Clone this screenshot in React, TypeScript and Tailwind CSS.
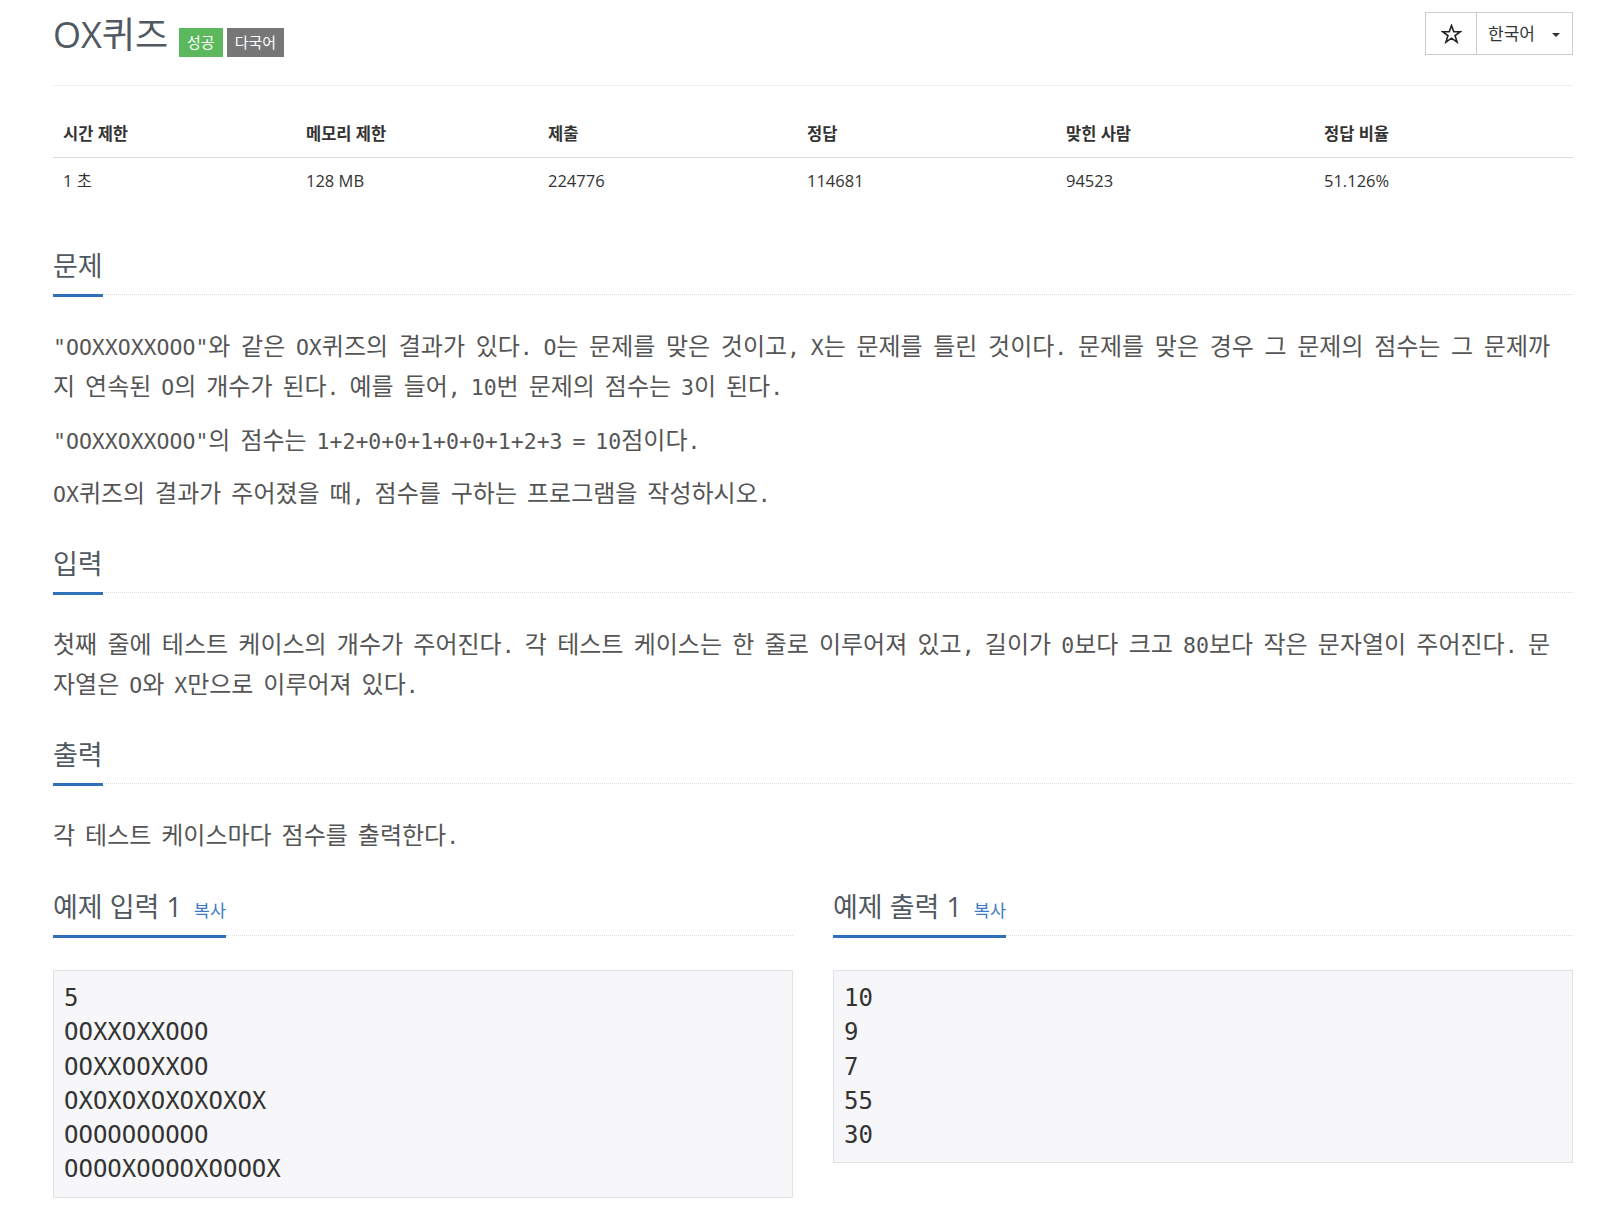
import React from "react";

function Headline({ children }: { children: React.ReactNode }) {
  return (
    <div className="flex border-b border-dotted border-[#dcdcdc]">
      <h2 className="-mb-[3px] flex items-baseline border-b-[3px] border-[#3071bc] pb-[14px] text-[27px] leading-[28px] font-normal text-[#505862]">
        {children}
      </h2>
    </div>
  );
}

function Txt({ text }: { text: string }) {
  const parts = text.split(/([\uAC00-\uD7A3]+)/);
  return (
    <>
      {parts.map((p, i) =>
        /[\uAC00-\uD7A3]/.test(p) ? (
          <span key={i} className="font-['Noto_Sans_CJK_KR',sans-serif] text-[24px] leading-none">
            {p}
          </span>
        ) : (
          <React.Fragment key={i}>{p}</React.Fragment>
        )
      )}
    </>
  );
}

const heads = ["시간 제한", "메모리 제한", "제출", "정답", "맞힌 사람", "정답 비율"];
const vals = ["1 초", "128 MB", "224776", "114681", "94523", "51.126%"];

const bodyCls =
  "mt-[33px] w-[1497px] text-justify [word-spacing:-3px] font-['DejaVu_Sans_Mono','Noto_Sans_CJK_KR',monospace] text-[21.5px] leading-[40px] text-[#555]";

function Star() {
  return (
    <svg width="21" height="20" viewBox="0 0 24 23" fill="none" stroke="#222" strokeWidth="1.9" strokeLinejoin="miter">
      <polygon points="12,1.8 14.6,8.9 22.2,8.9 16.1,13.4 18.4,20.8 12,16.3 5.6,20.8 7.9,13.4 1.8,8.9 9.4,8.9" />
    </svg>
  );
}

export default function App() {
  return (
    <div className="min-h-[1216px] bg-white font-['Open_Sans','Noto_Sans_CJK_KR',sans-serif] text-[#333]">
      <div className="ml-[53px] w-[1520px] pt-[12px] pb-[20px]">
        {/* title row */}
        <div className="flex justify-between">
          <div className="flex items-start">
            <h1 className="mt-[3px] text-[36px] leading-[40px] font-normal text-[#505862]">OX퀴즈</h1>
            <span className="ml-[11px] mt-[16px] h-[29px] bg-[#5cb85c] px-[8px] text-[15px] leading-[29px] text-white">성공</span>
            <span className="ml-[4px] mt-[16px] h-[29px] bg-[#777] px-[8px] text-[15px] leading-[29px] text-white">다국어</span>
          </div>
          <div className="flex h-[43px] border border-[#ccc] text-[#333]">
            <div className="flex w-[51px] items-center justify-center border-r border-[#ccc]">
              <Star />
            </div>
            <div className="flex w-[95px] items-center pl-[11px] text-[17px]">
              <span>한국어</span>
              <span className="ml-[17px] mt-[2px] h-0 w-0 border-x-[4.5px] border-t-[4.5px] border-x-transparent border-t-[#333]"></span>
            </div>
          </div>
        </div>
        <div className="mt-[28px] border-t border-[#eee]"></div>

        {/* info table */}
        <div className="mt-[29px] grid grid-cols-[243px_242px_259px_259px_258px_1fr] text-[16.5px]">
          {heads.map((h) => (
            <div key={h} className="border-b border-[#ddd] pl-[10px] pt-[8px] pb-[12px] leading-[22px] font-bold">
              {h}
            </div>
          ))}
          {vals.map((v) => (
            <div key={v} className="pl-[10px] pt-[12px] pb-[12px] leading-[22px]">
              {v}
            </div>
          ))}
        </div>

        {/* 문제 */}
        <div className="mt-[48px]">
          <Headline>문제</Headline>
        </div>
        <div className={bodyCls}>
          <p>
            <Txt text={'"OOXXOXXOOO"와 같은 OX퀴즈의 결과가 있다. O는 문제를 맞은 것이고, X는 문제를 틀린 것이다. 문제를 맞은 경우 그 문제의 점수는 그 문제까지 연속된 O의 개수가 된다. 예를 들어, 10번 문제의 점수는 3이 된다.'} />
          </p>
          <p className="mt-[14px]">
            <Txt text={'"OOXXOXXOOO"의 점수는 1+2+0+0+1+0+0+1+2+3 = 10점이다.'} />
          </p>
          <p className="mt-[13px]">
            <Txt text={"OX퀴즈의 결과가 주어졌을 때, 점수를 구하는 프로그램을 작성하시오."} />
          </p>
        </div>

        {/* 입력 */}
        <div className="mt-[35px]">
          <Headline>입력</Headline>
        </div>
        <div className={bodyCls}>
          <p>
            <Txt text={"첫째 줄에 테스트 케이스의 개수가 주어진다. 각 테스트 케이스는 한 줄로 이루어져 있고, 길이가 0보다 크고 80보다 작은 문자열이 주어진다. 문자열은 O와 X만으로 이루어져 있다."} />
          </p>
        </div>

        {/* 출력 */}
        <div className="mt-[35px]">
          <Headline>출력</Headline>
        </div>
        <div className={bodyCls}>
          <p>
            <Txt text={"각 테스트 케이스마다 점수를 출력한다."} />
          </p>
        </div>

        {/* samples */}
        <div className="mt-[36px] grid grid-cols-2 items-start gap-x-[40px]">
          <div>
            <Headline>
              <span>예제 입력 1</span>
              <span className="ml-[12px] text-[17.5px] leading-none text-[#3d7bc4]">복사</span>
            </Headline>
            <pre className="mt-[34px] border border-[#e1e1e8] bg-[#f7f7f9] px-[10px] py-[10px] font-['DejaVu_Sans_Mono',monospace] text-[24px] leading-[34.3px] text-[#333]">
{`5
OOXXOXXOOO
OOXXOOXXOO
OXOXOXOXOXOXOX
OOOOOOOOOO
OOOOXOOOOXOOOOX`}
            </pre>
          </div>
          <div>
            <Headline>
              <span>예제 출력 1</span>
              <span className="ml-[12px] text-[17.5px] leading-none text-[#3d7bc4]">복사</span>
            </Headline>
            <pre className="mt-[34px] border border-[#e1e1e8] bg-[#f7f7f9] px-[10px] py-[10px] font-['DejaVu_Sans_Mono',monospace] text-[24px] leading-[34.3px] text-[#333]">
{`10
9
7
55
30`}
            </pre>
          </div>
        </div>
      </div>
    </div>
  );
}
